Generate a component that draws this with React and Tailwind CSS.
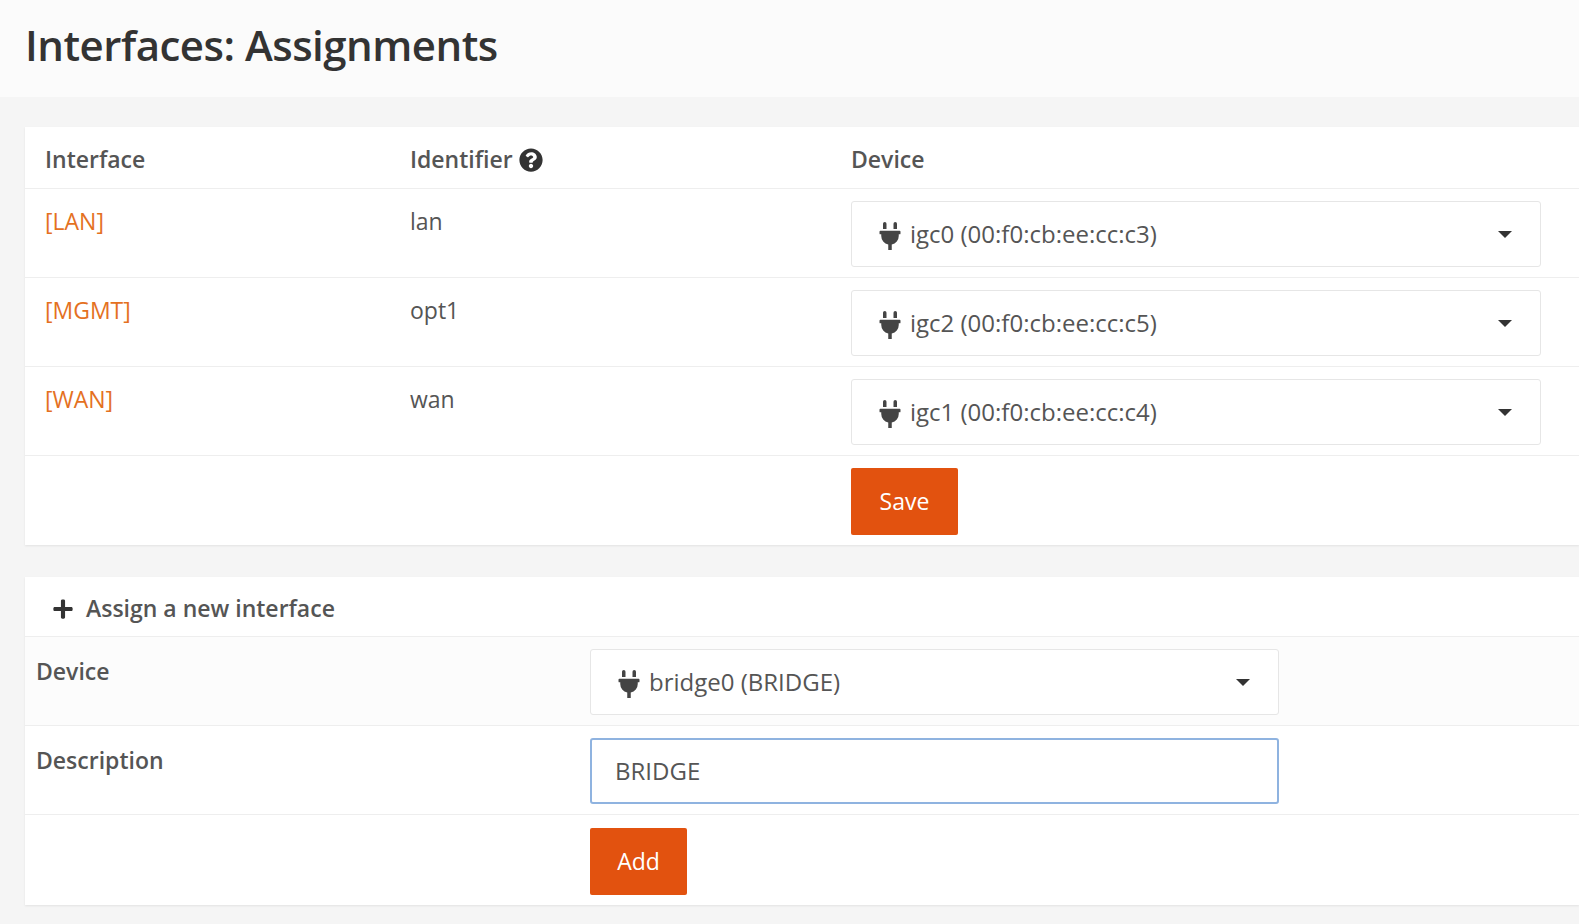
import { FaPlug, FaPlus, FaQuestionCircle } from 'react-icons/fa';

const ROWS = [
  { name: '[LAN]', id: 'lan', dev: 'igc0 (00:f0:cb:ee:cc:c3)' },
  { name: '[MGMT]', id: 'opt1', dev: 'igc2 (00:f0:cb:ee:cc:c5)' },
  { name: '[WAN]', id: 'wan', dev: 'igc1 (00:f0:cb:ee:cc:c4)' },
];

function Select({ label, className }) {
  return (
    <div className={`h-[66px] bg-white border border-[#e6e6e6] rounded-[3px] flex items-center pl-[24px] pr-[28px] text-[24px] text-[#555] ${className}`}>
      <FaPlug className="text-[#444] w-[28px] h-[28px] mr-[6px] translate-y-[2px]" />
      <span className="flex-1">{label}</span>
      <span className="w-0 h-0 border-l-[7px] border-r-[7px] border-t-[7px] border-l-transparent border-r-transparent border-t-[#333]" />
    </div>
  );
}

export default function App() {
  return (
    <div className="min-h-[924px] bg-[#f5f5f5] text-[#555]" style={{ fontFamily: '"Open Sans", "Noto Sans", sans-serif' }}>
      <div className="h-[97px] bg-[#fbfbfb] pl-[25px] flex items-center">
        <h1 className="text-[42px] font-semibold text-[#333] tracking-[-0.5px] -translate-y-[4px]">Interfaces: Assignments</h1>
      </div>
      <div className="pl-[25px] pt-[30px]">
        <div className="bg-white shadow-[0_1px_2px_rgba(0,0,0,0.08)]">
          <div className="h-[62px] flex items-center text-[23px] font-semibold text-[#555] border-b border-[#eee] pt-[4px]">
            <div className="w-[385px] pl-[20px]">Interface</div>
            <div className="w-[441px] flex items-center gap-[6px]">Identifier <FaQuestionCircle className="w-[24px] h-[24px] text-[#333]" /></div>
            <div>Device</div>
          </div>
          {ROWS.map(r => (
            <div key={r.id} className="h-[89px] flex border-b border-[#eee] text-[23px]">
              <div className="w-[385px] pl-[20px] pt-[15px] text-[#e4711f]">{r.name}</div>
              <div className="w-[441px] pt-[15px]">{r.id}</div>
              <div className="pt-[12px]"><Select label={r.dev} className="w-[690px]" /></div>
            </div>
          ))}
          <div className="h-[89px] flex items-center pl-[826px] pt-[2px]">
            <button className="w-[107px] h-[67px] bg-[#e2520f] text-white text-[23px] rounded-[2px]">Save</button>
          </div>
        </div>
        <div className="bg-white mt-[32px] shadow-[0_1px_2px_rgba(0,0,0,0.08)]">
          <div className="h-[60px] flex items-center pl-[27px] gap-[12px] text-[23px] font-semibold text-[#555] border-b border-[#eee] pt-[4px]">
            <FaPlus className="w-[22px] h-[22px] text-[#333]" /> Assign a new interface
          </div>
          <div className="h-[89px] flex border-b border-[#eee] bg-[#fcfcfc]">
            <div className="w-[565px] pl-[11px] pt-[17px] text-[23px] font-semibold">Device</div>
            <div className="pt-[12px]"><Select label="bridge0 (BRIDGE)" className="w-[689px]" /></div>
          </div>
          <div className="h-[89px] flex border-b border-[#eee]">
            <div className="w-[565px] pl-[11px] pt-[17px] text-[23px] font-semibold">Description</div>
            <div className="pt-[12px]">
              <div className="w-[689px] h-[66px] border-2 border-[#8fb3e0] rounded-[3px] flex items-center pl-[23px] text-[24px] text-[#555]">BRIDGE</div>
            </div>
          </div>
          <div className="h-[90px] flex items-center pl-[565px] pt-[2px]">
            <button className="w-[97px] h-[67px] bg-[#e2520f] text-white text-[23px] rounded-[2px]">Add</button>
          </div>
        </div>
      </div>
    </div>
  );
}
